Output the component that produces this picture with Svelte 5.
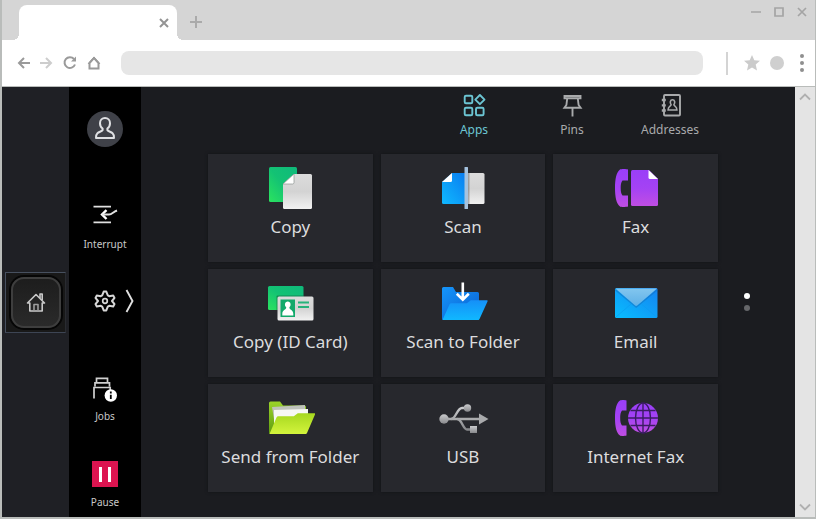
<!--
	PanelWindow: browser window showing the remote operation panel of a
	multifunction printer. Left rail holds the Home key, the black sidebar the
	device functions, the main area the app tiles.
-->
<script lang="ts">
	type Tab = { id: string; label: string };
	type App = { id: string; label: string };

	const tabs: Tab[] = [
		{ id: 'apps', label: 'Apps' },
		{ id: 'pins', label: 'Pins' },
		{ id: 'addresses', label: 'Addresses' }
	];

	const apps: App[] = [
		{ id: 'copy', label: 'Copy' },
		{ id: 'scan', label: 'Scan' },
		{ id: 'fax', label: 'Fax' },
		{ id: 'id-card', label: 'Copy (ID Card)' },
		{ id: 'scan-folder', label: 'Scan to Folder' },
		{ id: 'email', label: 'Email' },
		{ id: 'send-folder', label: 'Send from Folder' },
		{ id: 'usb', label: 'USB' },
		{ id: 'internet-fax', label: 'Internet Fax' }
	];

	let activeTab = $state('apps');
	let page = $state(0);
	let address = $state('');
</script>

<div class="window">
	<header class="titlebar">
		<div class="tab">
			<button class="plain" type="button" aria-label="Close tab">
				<svg width="10" height="10" viewBox="0 0 10 10" stroke="#949494" stroke-width="2">
					<path d="M1 1l8 8M9 1L1 9" />
				</svg>
			</button>
		</div>
		<button class="plain new-tab" type="button" aria-label="New tab">
			<svg width="12" height="12" viewBox="0 0 12 12" stroke="#aaa" stroke-width="2">
				<path d="M6 0v12M0 6h12" />
			</svg>
		</button>
		<div class="controls">
			<button class="plain" type="button" aria-label="Minimize">
				<svg width="10" height="10" viewBox="0 0 10 10" stroke="#a4a4a4" stroke-width="1.5">
					<path d="M0 5h10" />
				</svg>
			</button>
			<button class="plain" type="button" aria-label="Maximize">
				<svg width="10" height="10" viewBox="0 0 10 10" fill="none" stroke="#a4a4a4" stroke-width="1.7">
					<path d="M1 1h8v8H1z" />
				</svg>
			</button>
			<button class="plain" type="button" aria-label="Close window">
				<svg width="10" height="10" viewBox="0 0 10 10" stroke="#a4a4a4" stroke-width="1.7">
					<path d="M1 1l8 8M9 1L1 9" />
				</svg>
			</button>
		</div>
	</header>

	<div class="toolbar">
		<nav class="history" aria-label="Browser">
			<button class="plain" type="button" aria-label="Back">
				<svg width="14" height="14" viewBox="0 0 14 14" fill="none" stroke="#9a9a9a" stroke-width="2">
					<path d="M13 7H3M7 2L2 7l5 5" />
				</svg>
			</button>
			<button class="plain" type="button" aria-label="Forward">
				<svg width="14" height="14" viewBox="0 0 14 14" fill="none" stroke="#cdcdcd" stroke-width="2">
					<path d="M1 7h10M7 2l5 5-5 5" />
				</svg>
			</button>
			<button class="plain reload" type="button" aria-label="Reload">
				<svg width="14" height="14" viewBox="0 0 14 14" fill="none" stroke="#9a9a9a" stroke-width="2">
					<path d="M12 8.5A5.4 5.4 0 1 1 11 3" />
					<path d="M13 .5V5.5H8z" fill="#9a9a9a" stroke="none" />
				</svg>
			</button>
			<button class="plain" type="button" aria-label="Home page">
				<svg width="14" height="14" viewBox="0 0 14 14" fill="none" stroke="#9a9a9a" stroke-width="2">
					<path d="M2.5 12.5V7L7 2l4.5 5v5.5z" />
					<path d="M1 8l6-7 6 7" stroke-width="1" />
				</svg>
			</button>
		</nav>
		<input class="address" type="text" aria-label="Address" bind:value={address} />
		<div class="tools">
			<span class="divider"></span>
			<button class="plain" type="button" aria-label="Bookmark">
				<svg width="16" height="16" viewBox="0 0 16 16" fill="#cbcbcb">
					<path d="M8 0l2.3 5.3 5.7.5-4.3 3.8L13 15.5 8 12.4 3 15.5l1.3-5.9L0 5.8l5.7-.5z" />
				</svg>
			</button>
			<button class="plain" type="button" aria-label="Profile">
				<svg width="14" height="14" viewBox="0 0 14 14" fill="#cfcfcf">
					<circle cx="7" cy="7" r="7" />
				</svg>
			</button>
			<button class="plain" type="button" aria-label="Menu">
				<svg width="4" height="18" viewBox="0 0 4 18" fill="#8f8f8f">
					<circle cx="2" cy="2" r="2" />
					<circle cx="2" cy="9" r="2" />
					<circle cx="2" cy="16" r="2" />
				</svg>
			</button>
		</div>
	</div>

	<div class="viewport">
		<div class="rail">
			<button class="home-key" type="button" aria-label="Home">
				<span class="home-cap">
					<svg width="20" height="20" viewBox="0 0 20 20" fill="none" stroke="#c9c9c9" stroke-width="1.6" stroke-linejoin="round">
						<path d="M1.5 11L10 2.500l8.500 8.500h-2.300v8H3.800v-8z" />
						<path d="M14 6V2h2.200v6" />
						<path d="M8 18.800v-6.300h4v6.300" stroke="#9c9c9c" />
					</svg>
				</span>
			</button>
		</div>

		<nav class="sidebar" aria-label="Device">
			<button class="plain slot" type="button" aria-label="Log in">
				<svg class="slot-icon" viewBox="0 0 36 36" fill="none">
					<circle cx="18" cy="18" r="18" fill="#3f4148" />
					<path
						d="M15.6 17.5C13.900 16.300 13 14.500 13 12.200 13 9.300 15.200 7 18 7s5 2.300 5 5.200c0 2.300-.9 4.100-2.600 5.300v1.600c1 1.500 3.400 1.600 5.200 3.100 1.100 1 1.400 2.500 1.400 4.800H9c0-2.300.3-3.800 1.400-4.800 1.800-1.500 4.200-1.600 5.200-3.100z"
						stroke="#dfe0e3"
						stroke-width="2"
						stroke-linejoin="round"
					/>
				</svg>
			</button>
			<button class="plain slot" type="button">
				<svg class="slot-icon" viewBox="0 0 36 36" fill="none" stroke="#e0e0e0" stroke-width="1.8">
					<path d="M6.500 9.700h17.500M6.500 25.400h17.500" />
					<path d="M19.500 13.200L15 17.500l4.500 4.500" stroke="#fff" stroke-width="2.400" />
					<path d="M15 17.500h7c3 0 4-2.500 8-4" stroke-width="2" />
				</svg>
				<span class="slot-label">Interrupt</span>
			</button>
			<div class="slot settings">
				<button class="plain" type="button" aria-label="Settings">
					<svg class="slot-icon" viewBox="0 0 36 36" fill="none" stroke="#d6d6d6" stroke-width="2" stroke-linejoin="round">
						<path
							d="M16.700 8.600h2.600l1.500 3.800 1.400.8 4-.6 1.300 2.300-2.500 3.100 2.500 3.100-1.300 2.300-4-.6-1.400.8-1.500 3.800h-2.600l-1.500-3.800-1.400-.8-4 .6-1.300-2.300 2.500-3.100-2.500-3.100 1.300-2.300 4 .6 1.400-.8z"
						/>
						<circle cx="18" cy="18" r="2.300" stroke-width="1.700" />
					</svg>
				</button>
				<button class="plain" type="button" aria-label="More settings">
					<svg width="12" height="36" viewBox="0 0 12 36" fill="none" stroke="#e0e0e0" stroke-width="1.900">
						<path d="M3.500 7l6 11-6 11" />
					</svg>
				</button>
			</div>
			<button class="plain slot" type="button">
				<svg class="slot-icon" viewBox="0 0 36 36" fill="none" stroke="#cfcfcf" stroke-width="1.700">
					<path d="M9.500 13V9.300h11V13M8 17.500v-3.700h14.500v3.700M7 29.500V18.500h16.200v3" />
					<circle cx="23.800" cy="26.500" r="6.200" fill="#fff" stroke="none" />
					<path d="M23.800 25.700v4.300M23.800 22.500v2" stroke="#000" stroke-width="1.800" />
				</svg>
				<span class="slot-label">Jobs</span>
			</button>
			<button class="plain slot" type="button">
				<svg class="slot-icon" viewBox="0 0 36 36">
					<path d="M5 6h26v26H5z" fill="#dc1450" />
					<path d="M12 12h3v15h-3zM21 12h3v15h-3z" fill="#fff" />
				</svg>
				<span class="slot-label">Pause</span>
			</button>
		</nav>

		<main class="main">
			<div class="tabs" role="tablist">
				{#each tabs as tab (tab.id)}
					<button
						class="plain tab-button"
						class:active={activeTab === tab.id}
						type="button"
						role="tab"
						aria-selected={activeTab === tab.id}
						onclick={() => (activeTab = tab.id)}
					>
						<svg width="24" height="24" viewBox="0 0 24 24" fill="none" stroke="currentColor" stroke-width="1.9">
							{#if tab.id === 'apps'}
								<rect x="2.700" y="2.700" width="7.600" height="7.600" rx="1.300" />
								<rect x="2.700" y="14.700" width="7.600" height="7.600" rx="1.300" />
								<rect x="14" y="14.700" width="7.600" height="7.600" rx="1.300" />
								<path d="M17.900 2l4.600 4.600-4.600 4.600-4.600-4.600z" stroke-linejoin="round" />
							{:else if tab.id === 'pins'}
								<path d="M4.500 3h16v2.200h-16z" />
								<path d="M7.200 5.500L6.400 12l-2 2.700h16.200l-2-2.700-.8-6.500M12.500 15v8.500" />
							{:else}
								<rect x="6" y="2" width="16" height="20.500" rx="1" />
								<path d="M3.800 7h4M3.800 12.300h4M3.800 17.500h4" stroke-width="2.300" />
								<path
									d="M13.100 11.700c-1.500-1.800-.9-5 1.400-5s2.900 3.200 1.400 5c.2 1.800 3 1.200 3 5.300h-8.800c0-4.100 2.800-3.500 3-5.300z"
									stroke-width="1.600"
								/>
							{/if}
						</svg>
						{tab.label}
					</button>
				{/each}
			</div>

			<div class="board">
				<div class="grid">
					{#each apps as app (app.id)}
						<button class="tile" type="button">
							<svg width="48" height="48" viewBox="0 0 48 48" fill="none">
								{#if app.id === 'copy'}
									<rect x="3" y="3" width="28" height="35" rx="1.500" fill="url(#green)" />
									<path d="M28 10h16.500a1.500 1.500 0 0 1 1.500 1.500v32a1.500 1.500 0 0 1-1.500 1.500h-26a1.500 1.500 0 0 1-1.500-1.500V20z" fill="url(#paper)" />
									<path d="M28 10v8.500a1.500 1.500 0 0 1-1.500 1.500H17z" fill="#fff" stroke="#8d9491" stroke-width=".7" />
								{:else if app.id === 'scan'}
									<path d="M13 9h14v31H4.500A1.500 1.500 0 0 1 3 38.500V18z" fill="url(#blue)" />
									<path d="M13 9v7.500a1.500 1.500 0 0 1-1.500 1.500H3z" fill="#fff" />
									<path d="M28 9h16a1.500 1.500 0 0 1 1.500 1.500v28A1.500 1.500 0 0 1 44 40H28z" fill="url(#paper)" />
									<path d="M29 9h1.500v31H29z" fill="#17191e" opacity=".3" />
									<rect x="25.500" y="3" width="3.500" height="42" rx=".5" fill="#a5c3df" />
								{:else if app.id === 'fax'}
									<path d="M8 5.500C4.500 8 3 15 3 24s1.500 16 5 18.500c1 .7 6.500.4 8 0V31.500H10.500C9 30 8.700 27 8.700 24s.3-6 1.800-7.500H16V5.500c-1.500-.7-7-.7-8 0z" fill="url(#purple)" />
									<path d="M20.500 6H37l9 9v25.500a1.500 1.500 0 0 1-1.500 1.500h-24a1.500 1.500 0 0 1-1.500-1.500v-33A1.500 1.500 0 0 1 20.500 6z" fill="url(#purple)" />
									<path d="M36.500 6v7.500a1.500 1.500 0 0 0 1.500 1.500h8z" fill="#fff" />
								{:else if app.id === 'id-card'}
									<rect x="2" y="7" width="35.500" height="24" rx="1.500" fill="url(#green)" />
									<path d="M10.500 31V17.500a1 1 0 0 1 1-1h26V31z" fill="#0c2018" opacity=".35" />
									<rect x="11.500" y="17.500" width="36" height="24" rx="1.500" fill="url(#paper)" />
									<path d="M14.500 20.500h14.500v17.500H14.500z" fill="#12a96b" />
									<path d="M20.300 28.500c-2.300-2.200-1.500-6 1.500-6s3.800 3.800 1.500 6c.2 2.300 4 2.200 4 6.500v1.500h-11V35c0-4.300 3.800-4.200 4-6.500z" fill="#fff" />
									<path d="M32 23.500h11M32 28h11" stroke="#27b37b" stroke-width="2" />
								{:else if app.id === 'scan-folder'}
									<path d="M3 9.500A1.500 1.500 0 0 1 4.500 8H14l3 5h21.500a1.500 1.500 0 0 1 1.500 1.500V41H4.500A1.500 1.500 0 0 1 3 39.500z" fill="url(#blueDeep)" />
									<path d="M3.500 41l7-15.500a2 2 0 0 1 1.800-1.200h15.500l4-3h16c.7 0 1 .5.7 1.200L40.500 40a1.500 1.500 0 0 1-1.500 1z" fill="url(#blueLight)" />
									<path d="M23.800 3.500V20.500M17.800 14.800l6 5.900 6-5.900" stroke="#fff" stroke-width="2.600" />
								{:else if app.id === 'email'}
									<rect x="3" y="9" width="42.500" height="30" rx="1.500" fill="url(#mail)" />
									<path d="M4 38l15-13M44.500 38l-15-13" stroke="#0a9af0" stroke-width=".6" />
									<path d="M3.500 11l20.700 17L45 11" stroke="#126ebc" opacity=".5" stroke-width="1.500" />
									<path d="M3.500 9.500h41.500L25.500 26.300a2 2 0 0 1-2.600 0z" fill="url(#flap)" />
								{:else if app.id === 'send-folder'}
									<path d="M3 9a1.500 1.500 0 0 1 1.500-1.500H14l3 4h21.500A1.500 1.500 0 0 1 40 13v27H4.500A1.500 1.500 0 0 1 3 38.500z" fill="url(#lime)" />
									<path d="M6 13l33-2v14H8z" fill="#bfc3bb" />
									<path d="M8 16l34-1v12L8 34z" fill="#f7f8f4" />
									<path d="M3.500 40l7-16.500a2 2 0 0 1 1.800-1.200h15.500l4-3h16.500c.7 0 1 .5.7 1.200L41 39a1.500 1.500 0 0 1-1.500 1z" fill="url(#limeLight)" />
								{:else if app.id === 'usb'}
									<path d="M5 25h36" stroke="#aaabad" stroke-width="2.400" />
									<path d="M12 25c5 0 6-11 11-11h5M18 25c5 0 6 10.500 10 10.500h6" stroke="url(#metal)" stroke-width="2.400" />
									<circle cx="5" cy="25" r="4.700" fill="url(#metal)" />
									<path d="M40 19.500l9.500 5.500-9.500 5.500z" fill="#a9aaac" />
									<circle cx="28.500" cy="14" r="3.700" fill="url(#metal)" />
									<path d="M31 32h7v7h-7z" fill="url(#metal)" />
								{:else}
									<path d="M8 6.500C4.500 9 3 15 3 24s1.500 15 5 17.500c1 .7 5 .4 6.500 0V31.500H10C8.500 30 8.200 27 8.200 24s.3-6 1.800-7.500h4.500V6.500c-1.500-.7-5.500-.7-6.500 0z" fill="url(#purple)" />
									<circle cx="31" cy="24" r="15" fill="url(#purple)" />
									<g stroke="#3b1d63" stroke-width="1.400">
										<ellipse cx="31" cy="24" rx="7.500" ry="15" />
										<path d="M31 9v30M16 24h30M18.500 16.500h25M18.500 31.500h25" />
									</g>
								{/if}
							</svg>
							<span>{app.label}</span>
						</button>
					{/each}
				</div>
				<div class="pager">
					{#each [0, 1] as n (n)}
						<button
							class="plain dot"
							class:current={page === n}
							type="button"
							aria-label="Page {n + 1}"
							onclick={() => (page = n)}
						></button>
					{/each}
				</div>
			</div>
		</main>

		<div class="scrollbar">
			<button class="plain" type="button" aria-label="Scroll up">
				<svg width="12" height="8" viewBox="0 0 12 8" fill="none" stroke="#b0b0b0" stroke-width="1.800">
					<path d="M1 6.500l5-5 5 5" />
				</svg>
			</button>
			<button class="plain" type="button" aria-label="Scroll down">
				<svg width="12" height="8" viewBox="0 0 12 8" fill="none" stroke="#b0b0b0" stroke-width="1.800">
					<path d="M1 1.500l5 5 5-5" />
				</svg>
			</button>
		</div>
	</div>
</div>

<!-- gradients shared by the tile icons -->
<svg class="defs" width="0" height="0" aria-hidden="true">
	<defs>
		<linearGradient id="green" x1="1" y1="0" x2="0" y2="1">
			<stop offset="0" stop-color="#0fb97b" />
			<stop offset=".5" stop-color="#13c274" />
			<stop offset="1" stop-color="#2be35f" />
		</linearGradient>
		<linearGradient id="paper" x1="0" y1="0" x2="0" y2="1">
			<stop offset="0" stop-color="#dcdcdc" />
			<stop offset=".5" stop-color="#d3d3d3" />
			<stop offset="1" stop-color="#f1f1f1" />
		</linearGradient>
		<linearGradient id="blue" x1="1" y1="0" x2="0" y2="1">
			<stop offset="0" stop-color="#0a7cf0" />
			<stop offset="1" stop-color="#0fb9ff" />
		</linearGradient>
		<linearGradient id="blueDeep" x1="0" y1="0" x2="1" y2="1">
			<stop offset="0" stop-color="#1595fa" />
			<stop offset="1" stop-color="#0a5fd0" />
		</linearGradient>
		<linearGradient id="blueLight" x1="0" y1="0" x2="0" y2="1">
			<stop offset="0" stop-color="#1590f8" />
			<stop offset="1" stop-color="#10b8ff" />
		</linearGradient>
		<linearGradient id="mail" x1="1" y1="0" x2="0" y2="1">
			<stop offset="0" stop-color="#1583f0" />
			<stop offset="1" stop-color="#08beff" />
		</linearGradient>
		<linearGradient id="flap" x1="0" y1="0" x2="0" y2="1">
			<stop offset="0" stop-color="#82c6ef" />
			<stop offset="1" stop-color="#5fb0e6" />
		</linearGradient>
		<linearGradient id="purple" x1="0" y1="0" x2="0" y2="1">
			<stop offset="0" stop-color="#9a3ff8" />
			<stop offset=".5" stop-color="#a442f4" />
			<stop offset="1" stop-color="#c04ee2" />
		</linearGradient>
		<linearGradient id="lime" x1="0" y1="0" x2="0" y2="1">
			<stop offset="0" stop-color="#9bd32a" />
			<stop offset="1" stop-color="#5f9c10" />
		</linearGradient>
		<linearGradient id="limeLight" x1="0" y1="0" x2="0" y2="1">
			<stop offset="0" stop-color="#a6d81f" />
			<stop offset="1" stop-color="#d3f43c" />
		</linearGradient>
		<linearGradient id="metal" x1="0" y1="0" x2="0" y2="1">
			<stop offset="0" stop-color="#c9cacc" />
			<stop offset="1" stop-color="#88898c" />
		</linearGradient>
	</defs>
</svg>

<style>
	:global(body) {
		margin: 0;
	}

	.window {
		box-sizing: border-box;
		border: solid #b9bcba;
		border-width: 0 1px 2px 2px;
		background: #fff;
		font-family: 'Noto Sans', 'Open Sans', sans-serif;
	}

	svg {
		display: block;
	}

	.defs {
		position: absolute;
	}

	.plain {
		padding: 0;
		border: none;
		background: transparent;
		color: inherit;
		font: inherit;
		cursor: pointer;
	}

	.titlebar {
		display: flex;
		align-items: flex-end;
		height: 40px;
		padding-left: 17px;
		background: #d5d5d5;
	}

	.tab {
		box-sizing: border-box;
		position: relative;
		display: flex;
		align-items: center;
		justify-content: flex-end;
		width: 158px;
		height: 35px;
		padding-right: 8px;
		border-radius: 8px 8px 0 0;
		background: #fff;
	}

	/* flared feet of the tab */
	.tab::before,
	.tab::after {
		content: '';
		position: absolute;
		bottom: 0;
		width: 6px;
		height: 6px;
	}

	.tab::before {
		right: 100%;
		background: radial-gradient(circle at 0 0, #d5d5d5 6px, #fff 6px);
	}

	.tab::after {
		left: 100%;
		background: radial-gradient(circle at 100% 0, #d5d5d5 6px, #fff 6px);
	}

	.new-tab {
		align-self: center;
		margin: 4px 0 0 13px;
	}

	.controls {
		display: flex;
		align-self: flex-start;
		gap: 13px;
		margin-left: auto;
		padding: 7px 8px 0 0;
	}

	.toolbar {
		display: flex;
		align-items: center;
		height: 46px;
		border-bottom: 1px solid #b9bcba;
	}

	.history {
		display: flex;
		gap: 8px;
		width: 104px;
		padding-left: 15px;
	}

	.reload {
		margin: 0 2px;
	}

	.address {
		box-sizing: border-box;
		flex: 1;
		min-width: 0;
		height: 24px;
		padding: 0 12px;
		border: none;
		border-radius: 8px;
		background: #e6e6e6;
		color: #555;
		font: 13px 'Noto Sans', sans-serif;
	}

	.tools {
		display: flex;
		align-items: center;
		gap: 16px;
		padding: 0 11px 0 23px;
	}

	.tools .plain + .plain {
		margin-left: -6px;
	}

	.tools .plain:last-child {
		margin-left: 0;
	}

	.divider {
		width: 2px;
		height: 23px;
		background: #d4d4d4;
	}

	.viewport {
		display: flex;
		background: #1b1c20;
	}

	.rail {
		display: flex;
		align-items: center;
		justify-content: center;
		width: 67px;
		background: #1f2025;
	}

	.home-key {
		box-sizing: border-box;
		display: flex;
		align-items: center;
		justify-content: center;
		width: 61px;
		height: 61px;
		padding: 0;
		border: 1px solid #47505f;
		border-color: #47505f #292b30 #3d4554 #47505f;
		background: #191919;
		cursor: pointer;
	}

	.home-cap {
		box-sizing: border-box;
		display: flex;
		align-items: center;
		justify-content: center;
		width: 50px;
		height: 51px;
		border: 2px solid #3e3e3e;
		border-radius: 13px;
		background: linear-gradient(#1d1d1d, #2a2a2a);
		box-shadow: 0 0 0 2px #060606;
	}

	.sidebar {
		display: grid;
		grid-template-rows: repeat(5, 86px);
		width: 72px;
		background: #000;
		color: #c9c9c9;
	}

	.slot {
		display: flex;
		flex-direction: column;
		align-items: center;
		gap: 4px;
		padding-top: 24px;
	}

	.slot.settings {
		display: grid;
		grid-template-columns: 1fr 36px 1fr;
		align-items: start;
		gap: 0;
	}

	.settings .plain:first-child {
		grid-column: 2;
	}

	.slot-icon {
		width: 36px;
		height: 36px;
	}

	.slot-label {
		font-size: 10px;
		line-height: 14px;
	}

	.main {
		flex: 1;
		min-width: 0;
		padding: 0 0 24px 67px;
	}

	.tabs {
		display: flex;
		justify-content: flex-end;
		height: 67px;
		padding-right: 76px;
	}

	.tab-button {
		display: flex;
		flex-direction: column;
		align-items: center;
		gap: 5px;
		width: 98px;
		padding-top: 6px;
		color: #a9aaac;
		font-size: 12px;
		line-height: 16px;
	}

	.tab-button.active {
		color: #6cc5d3;
	}

	.board {
		display: flex;
		align-items: center;
	}

	.grid {
		display: grid;
		flex: 1;
		grid-template-columns: repeat(3, 1fr);
		grid-auto-rows: 108px;
		gap: 7px 8px;
	}

	.tile {
		display: flex;
		flex-direction: column;
		align-items: center;
		gap: 4px;
		min-width: 0;
		padding: 10px 0 0;
		border: none;
		background: #27282d;
		box-shadow: 0 0 3px #121317;
		color: #dcdcde;
		font: 17px 'Noto Sans', 'Open Sans', sans-serif;
		line-height: 22px;
		cursor: pointer;
	}

	.tile svg {
		overflow: visible;
	}

	.pager {
		display: flex;
		flex-direction: column;
		gap: 6px;
		width: 51px;
		padding: 0 0 42px 26px;
	}

	.dot {
		width: 6px;
		height: 6px;
		border-radius: 50%;
		background: #66676a;
	}

	.dot.current {
		background: #fff;
	}

	.scrollbar {
		display: flex;
		flex-direction: column;
		align-items: center;
		justify-content: space-between;
		width: 20px;
		padding: 6px 0;
		box-sizing: border-box;
		background: #e4e4e4;
	}
</style>
